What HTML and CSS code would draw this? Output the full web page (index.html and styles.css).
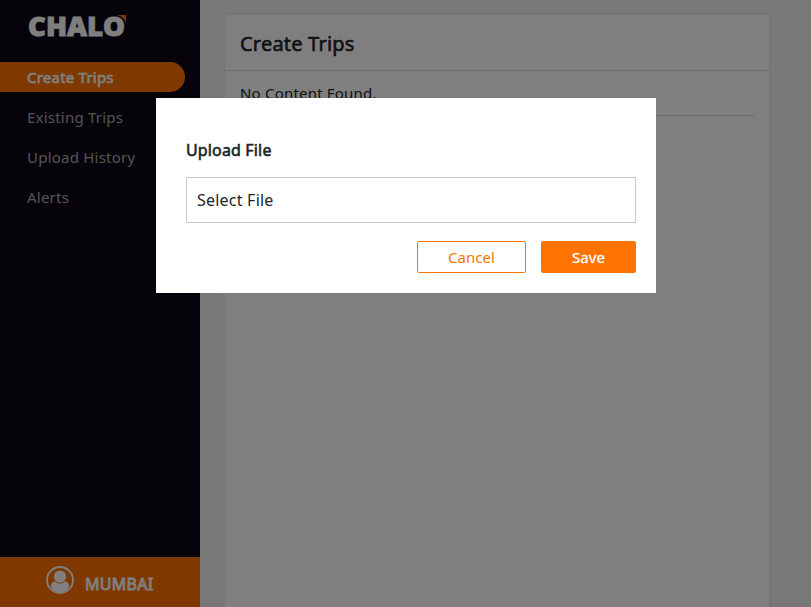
FILE: index.html
```html
<!DOCTYPE html>
<html lang="en">
<head>
<meta charset="utf-8">
<title>Create Trips</title>
<link rel="stylesheet" href="styles.css">
</head>
<body>
<div class="app">
  <aside class="sidebar">
    <svg class="logo" width="100" height="40" viewBox="0 -6 100 40" role="img" aria-label="Chalo">
      <path class="logo-flag" d="M90 1h9v9q-1-7-9-9z"/>
      <text class="logo-text" x="1" y="22.2" textLength="97" lengthAdjust="spacingAndGlyphs">CHALO</text>
    </svg>
    <nav class="nav">
      <a class="nav-item active"><span class="semi">Create Trips</span></a>
      <a class="nav-item">Existing Trips</a>
      <a class="nav-item">Upload History</a>
      <a class="nav-item">Alerts</a>
    </nav>
    <div class="city">
      <svg class="avatar" width="28" height="28" viewBox="0 0 28 28">
        <circle cx="14" cy="14" r="13" fill="none" stroke="#fff" stroke-width="1.8"/>
        <circle cx="14" cy="10.6" r="6.1" fill="#fff"/>
        <path d="M4.6 20.5Q5.4 15.8 8.6 15.2Q14 20 19.4 15.2Q22.6 15.8 23.4 20.5Q20 26.8 14 27Q8 26.8 4.6 20.5z" fill="#fff"/>
      </svg>
      <span class="city-name semi">MUMBAI</span>
    </div>
  </aside>
  <main class="main">
    <section class="card">
      <h1 class="card-title semi">Create Trips</h1>
      <div class="card-body"><p class="empty">No Content Found.</p></div>
    </section>
  </main>
</div>
<div class="overlay">
  <div class="modal">
    <h2 class="modal-title semi">Upload File</h2>
    <div class="file">Select File</div>
    <div class="actions">
      <button class="btn cancel">Cancel</button>
      <button class="btn save">Save</button>
    </div>
  </div>
</div>
</body>
</html>
```
FILE: styles.css
```css
* { box-sizing: border-box; }
body { margin: 0; height: 607px; overflow: hidden; font: 15px/20px "Noto Sans", sans-serif; color: #212529; letter-spacing: .22px; }
.semi { font-weight: 400; -webkit-text-stroke: .6px currentColor; }
.app { display: flex; height: 607px; }
.sidebar { width: 200px; display: flex; flex-direction: column; background: #0d0716; color: #fff; }
.logo { margin: 8px 0 14px 27px; flex: none; overflow: visible; }
.logo-text { font: 800 27px "Open Sans", sans-serif; letter-spacing: 0; fill: #fff; stroke: #fff; stroke-width: .9px; }
.logo-flag { fill: #ff7300; }
.nav { display: flex; flex-direction: column; gap: 10px; }
.nav-item { height: 30px; width: 185px; padding-left: 27px; line-height: 31px; color: #a9a9a9; }
.nav-item.active { background: #ff7300; color: #fff; border-radius: 0 15px 15px 0; }
.city { margin-top: auto; height: 50px; background: #ff7300; display: flex; padding: 9px 0 0 46px; gap: 11px; }
.city-name { font-size: 16px; line-height: 36px; letter-spacing: .3px; -webkit-text-stroke-width: .8px; }
.main { flex: 1; padding: 15px 42px 0 25px; background: #f0f0f0; }
.card { height: 620px; background: #fff; border-radius: 3px; box-shadow: 0 0 4px rgba(0,0,0,.06); }
.card-title { margin: 0; height: 56px; padding-left: 15px; border-bottom: 1px solid #d8d8d8; font-size: 20px; line-height: 58px; letter-spacing: .2px; }
.card-body { padding: 0 15px; }
.empty { margin: 0; height: 45px; line-height: 44px; letter-spacing: .2px; border-bottom: 1px solid #d8d8d8; }
.overlay { position: fixed; inset: 0; background: rgba(0,0,0,.5); padding: 98px 0 0 156px; }
.modal { width: 500px; height: 195px; padding: 42px 20px 0 30px; background: #fff; }
.modal-title { margin: 0 0 17px; font-size: 16px; line-height: 20px; letter-spacing: .15px; }
.file { height: 46px; border: 1px solid #c8c8c8; padding-left: 10px; font-size: 16px; line-height: 45px; }
.actions { display: flex; justify-content: flex-end; gap: 15px; margin-top: 18px; }
.btn { height: 32px; padding: 0; border: 1px solid #ff7300; border-radius: 2px; font: 15px/31px "Noto Sans", sans-serif; letter-spacing: .05px; }
.cancel { width: 109px; background: #fff; color: #ff7300; }
.save { width: 95px; background: #ff7300; color: #fff; -webkit-text-stroke: .3px #fff; }
```
